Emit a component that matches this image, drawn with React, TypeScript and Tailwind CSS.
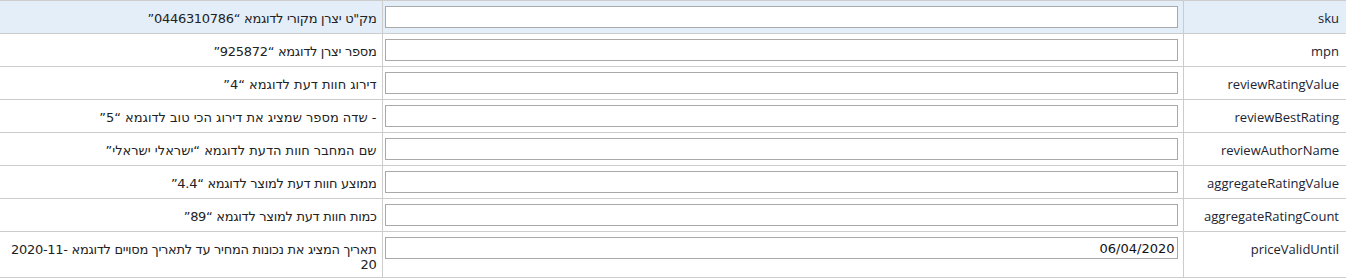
import React from "react";

const rows: { label: string; desc: string; value?: string; active?: boolean; tight?: boolean }[] = [
  { label: "sku", desc: "מק\"ט יצרן מקורי לדוגמא “0446310786”", active: true, tight: true },
  { label: "mpn", desc: "מספר יצרן לדוגמא “925872”", tight: true },
  { label: "reviewRatingValue", desc: "דירוג חוות דעת לדוגמא “4”" },
  { label: "reviewBestRating", desc: "- שדה מספר שמציג את דירוג הכי טוב לדוגמא “5”" },
  { label: "reviewAuthorName", desc: "שם המחבר חוות הדעת לדוגמא “ישראלי ישראלי”" },
  { label: "aggregateRatingValue", desc: "ממוצע חוות דעת למוצר לדוגמא “4.4”", tight: true },
  { label: "aggregateRatingCount", desc: "כמות חוות דעת למוצר לדוגמא “89”", tight: true },
  { label: "priceValidUntil", desc: "תאריך המציג את נכונות המחיר עד לתאריך מסויים לדוגמא 2020-11-\u200B20", value: "06/04/2020", tight: true },
];

export default function App() {
  return (
    <div className="w-[1346px] h-[280px] bg-white overflow-hidden">
      <table dir="rtl" className="w-[1346px] border-collapse table-fixed border-t border-[#cccccc]">
        <colgroup>
          <col className="w-[163px]" />
          <col className="w-[801px]" />
          <col className="w-[382px]" />
        </colgroup>
        <tbody>
          {rows.map((r) => (
            <tr key={r.label} className={(r.active ? "bg-[#e4eef9] " : "bg-white ") + "border-b border-[#cccccc]"}>
              <td className="align-top pt-[8px] pr-[7px] pl-1 text-[13px] leading-[18px] text-[#1b2333] border-l border-[#cccccc] [font-family:'Open_Sans',sans-serif]">
                <span dir="ltr">{r.label}</span>
              </td>
              <td className="align-top pt-[5px] pb-[5px] pr-[5px] pl-[2px] border-l border-[#cccccc]">
                <input
                  dir="rtl"
                  defaultValue={r.value ?? ""}
                  className="block w-full h-[22px] border border-[#a9a9a9] bg-white px-[2px] text-[13px] text-[#111] outline-none [font-family:'DejaVu_Sans',Verdana,sans-serif]"
                />
              </td>
              <td
                className={
                  (r.tight ? "tracking-[-0.3px] " : "") +
                  "align-top pt-[10px] pb-[5px] pr-[5px] pl-[6px] text-[13px] leading-[15px] text-[#222] [font-family:'DejaVu_Sans',Verdana,sans-serif]"
                }
              >
                {r.desc}
              </td>
            </tr>
          ))}
        </tbody>
      </table>
    </div>
  );
}
